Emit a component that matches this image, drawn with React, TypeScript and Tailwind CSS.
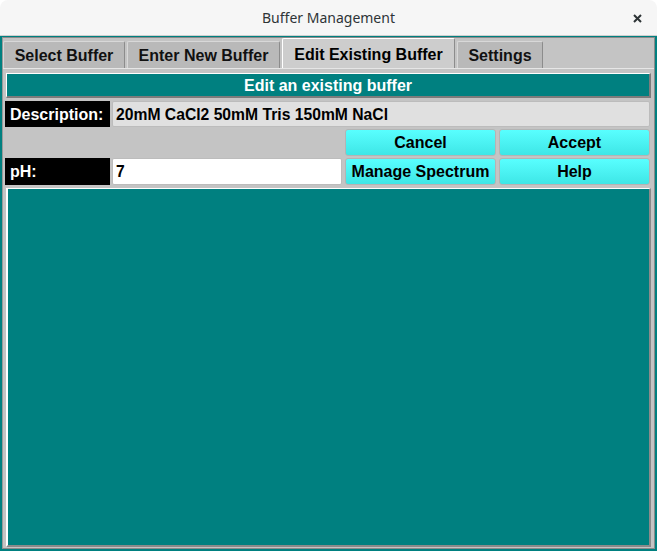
import React from 'react'

const tabs = [
  { label: 'Select Buffer', width: 'w-[122px]', active: false },
  { label: 'Enter New Buffer', width: 'w-[153px]', active: false },
  { label: 'Edit Existing Buffer', width: 'w-[173px]', active: true },
  { label: 'Settings', width: 'w-[86px]', active: false },
]

function ActionButton({ label }: { label: string }) {
  return (
    <button className="flex h-full w-full items-center justify-center rounded-[3px] border border-[#b4b4b4] bg-gradient-to-b from-[#58ffff] to-[#3ee6e6] pt-[1px] text-[16px] font-bold text-black">
      {label}
    </button>
  )
}

function Label({ text }: { text: string }) {
  return (
    <div className="flex h-full items-center bg-black pl-[5px] pt-[1px] text-[16px] font-bold text-white">
      {text}
    </div>
  )
}

export default function App() {
  return (
    <div
      className="flex h-[551px] w-[657px] flex-col overflow-hidden bg-white"
      style={{ fontFamily: '"Liberation Sans", Arial, sans-serif' }}
    >
      {/* title bar */}
      <div className="relative flex h-[36px] shrink-0 items-center justify-center rounded-t-[8px] border-b border-[#cfcfcf] bg-[#f6f6f6]">
        <span
          className="text-[14px] text-[#2e3436]"
          style={{ fontFamily: '"Noto Sans", sans-serif' }}
        >
          Buffer Management
        </span>
        <svg
          className="absolute right-[15px] top-[14px]"
          width="9"
          height="9"
          viewBox="0 0 9 9"
        >
          <path d="M1 1L8 8M8 1L1 8" stroke="#2e3436" strokeWidth="2" />
        </svg>
      </div>

      {/* window body */}
      <div className="flex flex-1 flex-col bg-[#008080] px-[2px] pb-[2px] pt-[1px]">
        <div className="flex flex-1 flex-col border border-[#8a8a8a] border-l-[#9a9a9a] bg-[#c4c4c4]">
          {/* tabs */}
          <div className="flex h-[30px] shrink-0 items-end gap-[2px]">
            {tabs.map((t) =>
              t.active ? (
                <div
                  key={t.label}
                  className={`${t.width} flex h-[30px] items-center justify-center rounded-t-[2px] border border-b-0 border-t-white border-l-white border-r-[#8c8c8c] bg-[#cdcdcd] pt-[2px] text-[16px] font-bold text-black`}
                >
                  {t.label}
                </div>
              ) : (
                <div
                  key={t.label}
                  className={`${t.width} flex h-[27px] items-center justify-center rounded-t-[2px] border border-b-0 border-t-[#d8d8d8] border-l-[#d8d8d8] border-r-[#8c8c8c] bg-[#b9b9b9] pt-[1px] text-[16px] font-bold text-[#111]`}
                >
                  {t.label}
                </div>
              ),
            )}
          </div>

          {/* panel */}
          <div className="flex flex-1 flex-col border-t border-[#e6e6e6] px-[2px] pb-[1px] pt-[4px]">
            <div className="mx-[1px] flex h-[25px] shrink-0 items-center justify-center border-2 border-t-white border-l-white border-r-[#7c7c7c] border-b-[#7c7c7c] border-t-[1px] border-l-[1px] bg-[#008080] pt-[1px] text-[16px] font-bold text-white">
              Edit an existing buffer
            </div>

            <div className="mt-[3px] grid shrink-0 grid-cols-[105px_2px_230px_3px_151px_3px_151px] grid-rows-[26px_27px_27px] gap-y-[2px]">
              <div className="col-start-1 row-start-1">
                <Label text="Description:" />
              </div>
              <div className="col-start-3 col-end-8 row-start-1 flex items-center rounded-[2px] border border-[#bcbcbc] bg-[#e0e0e0] pl-[3px] pt-[1px] text-[15.7px] font-bold text-black">
                20mM CaCl2 50mM Tris 150mM NaCl
              </div>

              <div className="col-start-5 row-start-2">
                <ActionButton label="Cancel" />
              </div>
              <div className="col-start-7 row-start-2">
                <ActionButton label="Accept" />
              </div>

              <div className="col-start-1 row-start-3">
                <Label text="pH:" />
              </div>
              <div className="col-start-3 row-start-3 flex items-center rounded-[2px] border border-[#bcbcbc] bg-white pl-[3px] pt-[1px] text-[15.7px] font-bold text-black">
                7
              </div>
              <div className="col-start-5 row-start-3">
                <ActionButton label="Manage Spectrum" />
              </div>
              <div className="col-start-7 row-start-3">
                <ActionButton label="Help" />
              </div>
            </div>

            <div className="mx-[1px] mt-[3px] flex-1 border-2 border-t-white border-l-white border-r-[#8a8a8a] border-b-[#8a8a8a] border-t-[1px] border-l-[2px] bg-[#008080]" />
          </div>
        </div>
      </div>
    </div>
  )
}
